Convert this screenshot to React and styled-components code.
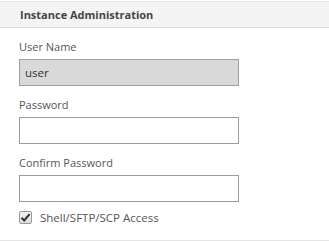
import React from 'react';
import styled, { createGlobalStyle } from 'styled-components';

const GlobalStyle = createGlobalStyle`
  body {
    margin: 0;
    background: #ffffff;
    font-family: "Open Sans", "Noto Sans", sans-serif;
    color: #444;
  }
`;

const Panel = styled.div`
  width: 329px;
  height: 243px;
  padding-top: 1px;
  box-sizing: border-box;
`;

const Header = styled.div`
  height: 25px;
  background: #f4f4f4;
  border-top: 1px solid #e8e8e8;
  border-bottom: 1px solid #dcdcdc;
  display: flex;
  align-items: center;
  padding-left: 20px;
`;

const Title = styled.h2`
  margin: 0;
  font-size: 11px;
  font-weight: bold;
  color: #444;
`;

const Body = styled.div`
  padding: 11px 0 0 19px;
  height: 213px;
  box-sizing: border-box;
  border-bottom: 1px solid #e6e6e6;
  display: flex;
  flex-direction: column;
`;

const Field = styled.div`
  display: flex;
  flex-direction: column;
  gap: 4px;
  margin-bottom: 11px;
`;

const Label = styled.label`
  font-size: 11px;
  line-height: 16px;
  color: #555;
`;

const Input = styled.input`
  width: 220px;
  height: 27px;
  box-sizing: border-box;
  border: 1px solid ${p => (p.disabled ? '#a0a0a0' : '#9c9c9c')};
  background: ${p => (p.disabled ? '#d9d9d9' : '#fff')};
  padding: 0 5px;
  font-family: inherit;
  font-size: 11.5px;
  color: #333;
  outline: none;
  margin: 0;
`;

const CheckRow = styled.label`
  display: flex;
  align-items: center;
  gap: 8px;
  margin-top: -3px;
  font-size: 11.5px;
  color: #555;
`;

const Box = styled.span`
  width: 13px;
  height: 13px;
  box-sizing: border-box;
  border: 1px solid #9a9a9a;
  border-radius: 2px;
  background: linear-gradient(#f4f4f4, #dcdcdc);
  display: flex;
  align-items: center;
  justify-content: center;
`;

const Check = () => (
  <Box>
    <svg width="11" height="11" viewBox="0 0 11 11">
      <path d="M1.5 5.8 L4.2 8.5 L9.6 2.2" fill="none" stroke="#333" strokeWidth="2" />
    </svg>
  </Box>
);

export default function App() {
  return (
    <>
      <GlobalStyle />
      <Panel>
        <Header>
          <Title>Instance Administration</Title>
        </Header>
        <Body>
          <Field>
            <Label>User Name</Label>
            <Input disabled value="user" readOnly />
          </Field>
          <Field>
            <Label>Password</Label>
            <Input type="password" />
          </Field>
          <Field>
            <Label>Confirm Password</Label>
            <Input type="password" />
          </Field>
          <CheckRow>
            <Check />
            Shell/SFTP/SCP Access
          </CheckRow>
        </Body>
      </Panel>
    </>
  );
}
